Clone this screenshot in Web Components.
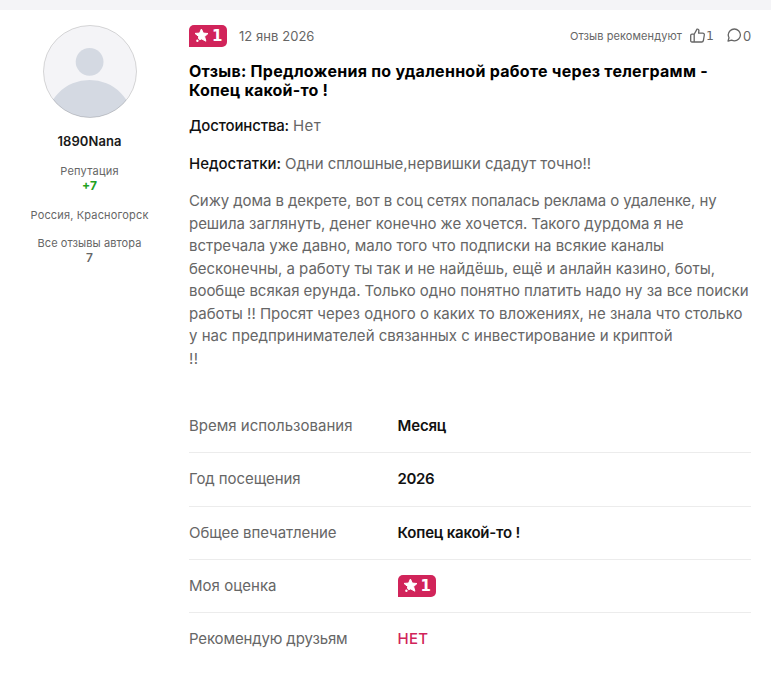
<!DOCTYPE html>
<html lang="ru">
<head>
<meta charset="utf-8">
<title>Отзыв</title>
<style>
html,body{margin:0;background:#fff}
body{font-family:Inter,"Liberation Sans",sans-serif;color:#666;overflow:hidden}
</style>
</head>
<body>
<review-page></review-page>
<script>
// A single line of text whose tracking is adjusted to a given measure.
class FitLine extends HTMLElement {
  connectedCallback() {
    const root = this.attachShadow({mode: 'open'});
    root.innerHTML = '<style>:host{display:block;white-space:nowrap}span{display:inline-block}</style><span><slot></slot></span>';
    const span = root.querySelector('span');
    const want = +this.getAttribute('w');
    const n = this.textContent.length;
    const have = span.getBoundingClientRect().width;
    const gap = (want - have) / n;
    span.style.letterSpacing = gap.toFixed(3) + 'px';
  }
}

class RatingBadge extends HTMLElement {
  connectedCallback() {
    this.attachShadow({mode: 'open'}).innerHTML = `<style>
      :host{display:flex;align-items:center;box-sizing:border-box;width:38px;height:22px;padding-left:5px;gap:3px;background:#d1245a;border-radius:5px 5px 5px 0;color:#fff;font:700 15px/22px "DejaVu Sans",sans-serif}
      svg{display:block;flex:none;margin-top:-1px}
    </style>
    <svg width="15" height="15" viewBox="0 0 15 15"><path fill="#fff" stroke="#fff" stroke-width="1" stroke-linejoin="round" d="M7.4 1 9.3 5.1 14 5.5 10.6 8.6 11.9 13.2 7.7 10.9 5.6 11.7 4.5 10.2 4.7 8.5 1 5.4 5.6 5.1Z"/><circle cx="3.4" cy="12.8" r="1.2" fill="#fff"/></svg>
    <slot></slot>`;
  }
}

class UserAvatar extends HTMLElement {
  connectedCallback() {
    this.attachShadow({mode: 'open'}).innerHTML = `<style>:host{display:block;width:94px;height:93px}svg{display:block}</style>
    <svg width="94" height="93" viewBox="0 0 94 93"><defs><clipPath id="c"><ellipse cx="47" cy="46.5" rx="46.5" ry="46"/></clipPath></defs>
    <g clip-path="url(#c)"><rect width="94" height="93" fill="#f4f4f7"/><circle cx="46.6" cy="36.8" r="13.9" fill="#d4d9e2"/><ellipse cx="46.6" cy="99" rx="44" ry="44" fill="#d4d9e2"/></g>
    <ellipse cx="47" cy="46.5" rx="46.5" ry="46" fill="none" stroke="#000" stroke-opacity=".15"/></svg>`;
  }
}

class AuthorCard extends HTMLElement {
  connectedCallback() {
    this.attachShadow({mode: 'open'}).innerHTML = `<style>
      :host{display:flex;flex-direction:column;align-items:center;width:179px;flex:none;padding-top:15px;font-size:11px;line-height:14px;box-sizing:border-box}
      .name{font-size:13px;font-weight:600;line-height:20px;color:#1a1a1a;margin:13px 0}
      .up{color:#21a121;font-weight:700;font-size:12px;padding-top:1px;margin-bottom:15px}
      .place{margin-bottom:14px}
      .count{font-size:12px;font-weight:600;line-height:14px;padding-top:1px}
    </style>
    <user-avatar></user-avatar>
    <fit-line class="name" w="64">1890Nana</fit-line>
    <fit-line w="58.5">Репутация</fit-line>
    <div class="up">+7</div>
    <fit-line class="place" w="118">Россия, Красногорск</fit-line>
    <fit-line w="104">Все отзывы автора</fit-line>
    <div class="count">7</div>`;
  }
}

class ReviewHead extends HTMLElement {
  connectedCallback() {
    this.attachShadow({mode: 'open'}).innerHTML = `<style>
      :host{display:flex;align-items:center;height:22px}
      .date{font-size:13px;margin-left:12px}
      .rec{font-size:11px;margin-left:auto}
      .n{font-size:13px;line-height:16px;width:8px}
      .one{font-family:"DejaVu Sans",sans-serif;font-size:12.5px}
      svg{display:block;fill:none;stroke:#666;stroke-width:1.3;stroke-linejoin:round;stroke-linecap:round}
      .up{margin:-1px 1px 0 8px}.talk{margin:-2px 1px 0 13px}
    </style>
    <rating-badge>1</rating-badge>
    <fit-line class="date" w="75.5">12 янв 2026</fit-line>
    <fit-line class="rec" w="112">Отзыв рекомендуют</fit-line>
    <svg class="up" width="15" height="15" viewBox="0 0 15 15"><path d="M4.2 6.2 7 1.1C8.2.8 9 1.6 8.9 2.7L8.6 5.1H12.6C13.8 5.1 14.5 6 14.3 7L13.4 12.5C13.2 13.5 12.6 14 11.7 14H2C1.2 14 .7 13.5.7 12.7V7.6C.7 6.7 1.2 6.2 2 6.2H4.2V14"/></svg><span class="n one">1</span>
    <svg class="talk" width="15" height="15" viewBox="0 0 15 15"><path d="M1 13.2 2 9.8C.8 7.4 1.3 4.5 3.1 2.7 5.4.4 9.3.4 11.6 2.7 14 5 14 8.7 11.7 11 9.9 12.8 7 13.3 4.6 12.2Z"/></svg><span class="n">0</span>`;
  }
}

class DetailRow extends HTMLElement {
  connectedCallback() {
    this.attachShadow({mode: 'open'}).innerHTML = `<style>
      :host{display:grid;grid-template-columns:208.6px 1fr;align-items:center;box-sizing:border-box;height:53.3px;border-bottom:1px solid #ececec;font-size:15px;line-height:22px}
      :host(:last-of-type){border-bottom-color:transparent}
      .v{color:#111;font-weight:600}
    </style>
    <fit-line w="${this.getAttribute('lw')}">${this.getAttribute('label')}</fit-line><div class="v"><slot></slot></div>`;
  }
}

class ReviewPage extends HTMLElement {
  connectedCallback() {
    this.attachShadow({mode: 'open'}).innerHTML = `<style>
      :host{display:block}
      .band{height:10px;background:#f4f4f7}
      .cols{display:flex}
      main{box-sizing:border-box;width:572px;padding:15px 0 0 10px;font-size:15px;line-height:22.5px}
      h1{margin:15px 0;font-size:16px;line-height:19px;font-weight:700;color:#000}
      .p{display:flex;gap:4px;margin-bottom:15px}
      b{font-weight:550;color:#111}
      .text{margin-bottom:30px}
      .no{color:#d1245a;font-weight:500}
    </style>
    <div class="band"></div>
    <div class="cols"><author-card></author-card>
    <main><review-head></review-head>
      <h1><fit-line w="519">Отзыв: Предложения по удаленной работе через телеграмм -</fit-line><fit-line w="139">Копец какой-то !</fit-line></h1>
      <div class="p"><b><fit-line w="100">Достоинства:</fit-line></b><fit-line w="28">Нет</fit-line></div>
      <div class="p"><b><fit-line w="92">Недостатки:</fit-line></b><fit-line w="306">Одни сплошные,нервишки сдадут точно!!</fit-line></div>
      <div class="text">
        <fit-line w="527.5">Сижу дома в декрете, вот в соц сетях попалась реклама о удаленке, ну</fit-line>
        <fit-line w="494.5">решила заглянуть, денег конечно же хочется. Такого дурдома я не</fit-line>
        <fit-line w="475">встречала уже давно, мало того что подписки на всякие каналы</fit-line>
        <fit-line w="526">бесконечны, а работу ты так и не найдёшь, ещё и анлайн казино, боты,</fit-line>
        <fit-line w="559.5">вообще всякая ерунда. Только одно понятно платить надо ну за все поиски</fit-line>
        <fit-line w="553.5">работы !! Просят через одного о каких то вложениях, не знала что столько</fit-line>
        <fit-line w="483.5">у нас предпринимателей связанных с инвестирование и криптой</fit-line>
        <fit-line w="9.5">!!</fit-line>
      </div>
      <detail-row label="Время использования" lw="163.5"><fit-line w="48.5">Месяц</fit-line></detail-row>
      <detail-row label="Год посещения" lw="111.5"><fit-line w="36.5">2026</fit-line></detail-row>
      <detail-row label="Общее впечатление" lw="147.5"><fit-line w="122.5">Копец какой-то !</fit-line></detail-row>
      <detail-row label="Моя оценка" lw="87.5"><rating-badge>1</rating-badge></detail-row>
      <detail-row label="Рекомендую друзьям" lw="158.5"><fit-line class="no" w="30.5">НЕТ</fit-line></detail-row>
    </main></div>`;
  }
}
customElements.define('fit-line', FitLine);
customElements.define('rating-badge', RatingBadge);
customElements.define('user-avatar', UserAvatar);
customElements.define('author-card', AuthorCard);
customElements.define('review-head', ReviewHead);
customElements.define('detail-row', DetailRow);
customElements.define('review-page', ReviewPage);
</script>
</body>
</html>
